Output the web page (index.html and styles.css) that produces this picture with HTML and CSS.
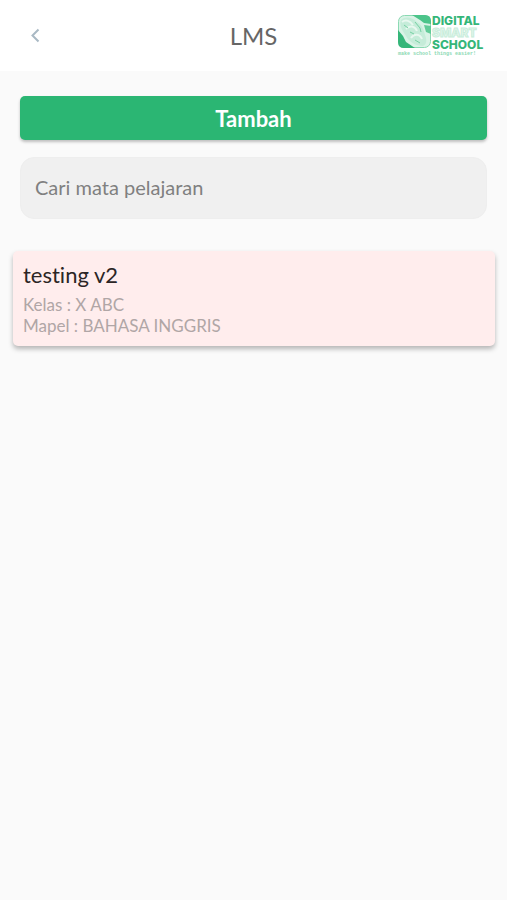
FILE: index.html
```html
<!DOCTYPE html>
<html lang="id">
<head>
  <meta charset="UTF-8" />
  <meta name="viewport" content="width=device-width, initial-scale=1.0" />
  <title>LMS</title>
  <link rel="stylesheet" href="styles.css">
</head>
<body>
  <header class="header">
    <button class="back" type="button" aria-label="Kembali">
      <svg width="10" height="16" viewBox="0 0 10 16" fill="none" stroke="#a9b9c4" stroke-width="2">
        <path d="M8.500 1.500 L2.500 7.500 L8.500 13.500" />
      </svg>
    </button>
    <h1>LMS</h1>
    <svg class="logo" width="86" height="48" viewBox="0 0 86 48" role="img" aria-label="Digital Smart School">
      <rect x="1.500" y="3.500" width="32" height="32" rx="6" fill="#d9f3e6" stroke="#8bd9b3" />
      <path d="M15 3 H28 Q34 3 34 9 V12 L27 11 L23 8 Z" fill="#4cc48a" />
      <path d="M27 13 L34 14 V22 L29 20 Z" fill="#62cb98" />
      <path d="M1 18 L6 24 L9 30 L18 36 H7 Q1 36 1 30 Z" fill="#35b679" />
      <path d="M4 8 C8 4 15 5 20 10 C25 13 27 18 28 23 C30 28 30 32 26 34 C19 34 12 30 9 24 C5 18 2 13 4 8 Z" fill="#c5ecd9" />
      <path d="M5 10 C9 7 13 9 16 13 M9 17 C13 13 18 14 20 19 M14 26 C17 21 23 22 25 27" fill="none" stroke="#e9f8f0" stroke-width="2" />
      <path d="M7 13 L11 16 M13 20 L17 22 M18 28 L23 31 M18 10 L23 16 L24 20" fill="none" stroke="#76d0a3" />
      <text class="logo-name" x="35" y="13">DIGITAL</text>
      <text class="logo-name logo-outline" x="35" y="25">SMART</text>
      <text class="logo-name" x="35" y="37">SCHOOL</text>
      <text class="logo-tagline" x="1" y="43">make school things easier!</text>
    </svg>
  </header>

  <main>
    <div class="actions">
      <button class="add" type="button">Tambah</button>
      <input class="search" type="text" placeholder="Cari mata pelajaran" aria-label="Cari mata pelajaran" />
    </div>

    <a class="card" href="#">
      <h2>testing v2</h2>
      <p>Kelas : X ABC</p>
      <p>Mapel : BAHASA INGGRIS</p>
    </a>
  </main>
</body>
</html>
```

FILE: styles.css
```css
* {
  box-sizing: border-box;
}
body {
  min-height: 100vh;
  margin: 0;
  font-family: Lato, 'Liberation Sans', sans-serif;
  font-variant-ligatures: none;
  background: #fafafa;
}
.header {
  display: grid;
  grid-template-columns: 1fr auto 1fr;
  align-items: center;
  height: 71px;
  padding: 0 24px;
  background: #fff;
}
.back {
  display: flex;
  justify-self: start;
  padding: 6px;
  border: none;
  background: none;
  cursor: pointer;
}
.header h1 {
  margin: 0;
  font-size: 24px;
  font-weight: 400;
  color: #666;
}
.logo {
  justify-self: end;
  overflow: visible;
}
.logo-name {
  font-family: Inter, sans-serif;
  font-size: 12px;
  font-weight: 800;
  fill: #35b679;
}
.logo-outline {
  fill: #e6f7ee;
  stroke: #c8eddb;
  stroke-width: 1px;
}
.logo-tagline {
  font-family: 'Liberation Mono', monospace;
  font-size: 5px;
  font-weight: 700;
  fill: #8bd9b3;
}
.actions {
  display: flex;
  flex-direction: column;
  gap: 17px;
  padding: 25px 20px 0;
}
.add {
  height: 44px;
  border: none;
  border-radius: 5px;
  background: #2bb673;
  box-shadow: 0 2px 3px rgba(0, 0, 0, 0.24);
  color: #fff;
  font-family: inherit;
  font-size: 22px;
  font-weight: 700;
  cursor: pointer;
}
.search {
  width: 100%;
  height: 62px;
  padding: 0 14px 2px;
  border: 1px solid #eee;
  border-radius: 14px;
  background: #f0f0f0;
  color: #333;
  font-family: inherit;
  font-size: 20px;
}
.search::placeholder {
  color: #808080;
}
.card {
  display: block;
  margin: 32px 12px 0 13px;
  padding: 10px 10px;
  border-radius: 5px;
  background: #ffeded;
  box-shadow: 0 3px 5px rgba(0, 0, 0, 0.28);
  text-decoration: none;
}
.card h2 {
  margin: 0 0 5px;
  font-size: 22px;
  line-height: 28px;
  font-weight: 400;
  color: #2b2525;
}
.card p {
  margin: 0;
  font-size: 17px;
  line-height: 21px;
  color: #b0a6a6;
}
```
